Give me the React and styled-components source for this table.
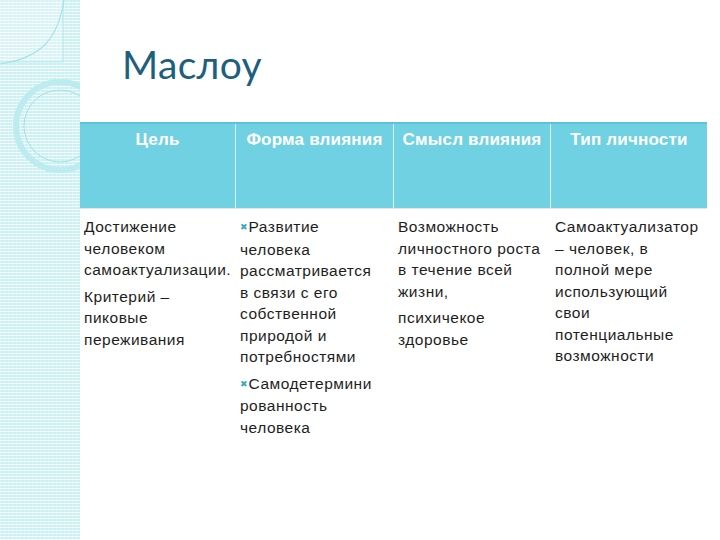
import styled, {createGlobalStyle} from 'styled-components';

const GlobalStyle = createGlobalStyle`
  html, body {
    margin: 0;
    padding: 0;
    background: #ffffff;
  }
  body {
    font-family: "Liberation Sans", Arial, sans-serif;
  }
`;

const columns = [
  {
    title: 'Цель',
    paras: [
      {lines: ['Достижение', 'человеком', 'самоактуализации.']},
      {lines: ['Критерий –', 'пиковые', 'переживания']},
    ],
  },
  {
    title: 'Форма влияния',
    paras: [
      {bullet: true, lines: ['Развитие', 'человека', 'рассматривается', 'в связи с его', 'собственной', 'природой и', 'потребностями']},
      {bullet: true, lines: ['Самодетермини', 'рованность', 'человека']},
    ],
  },
  {
    title: 'Смысл влияния',
    paras: [
      {lines: ['Возможность', 'личностного роста', 'в течение всей', 'жизни,']},
      {lines: ['психичекое', 'здоровье']},
    ],
  },
  {
    title: 'Тип личности',
    paras: [
      {lines: ['Самоактуализатор', '– человек, в', 'полной мере', 'использующий', 'свои', 'потенциальные', 'возможности']},
    ],
  },
];

const App = () => {
  return (
    <>
      <GlobalStyle />
      <Page>
        <Strip>
          <svg width="80" height="540" viewBox="0 0 80 540">
            <rect x="0" y="0" width="63" height="62" fill="rgba(255,255,255,0.25)" />
            <path d="M63 0 V62 H0" fill="none" stroke="#b2e7ec" strokeWidth="1" />
            <path d="M64 0 C58 40 40 58 0 64" fill="none" stroke="#a6e2e8" strokeWidth="1.2" />
            <circle cx="60" cy="126" r="44" fill="none" stroke="#bdecf0" strokeWidth="6" />
            <circle cx="60" cy="126" r="36" fill="none" stroke="#a4e0e7" strokeWidth="1" />
          </svg>
        </Strip>
        <Main>
          <Title>Маслоу</Title>
          <Table>
            <HeaderRow>
              {columns.map((c, i) => (
                <HeadCell key={i} $last={i === columns.length - 1}>{c.title}</HeadCell>
              ))}
            </HeaderRow>
            <BodyRow>
              {columns.map((c, i) => (
                <Cell key={i}>
                  {c.paras.map((p, j) => (
                    <Para key={j}>
                      {p.lines.map((l, k) => (
                        <Line key={k}>
                          {p.bullet && k === 0 && <Bullet>✖</Bullet>}
                          {l}
                        </Line>
                      ))}
                    </Para>
                  ))}
                </Cell>
              ))}
            </BodyRow>
          </Table>
        </Main>
      </Page>
    </>
  );
};

const Page = styled.div`
  display: flex;
  width: 720px;
  height: 540px;
  overflow: hidden;
`;

const Strip = styled.div`
  width: 80px;
  flex: 0 0 80px;
  height: 540px;
  background-color: #c9f0f2;
  background-image:
    repeating-linear-gradient(0deg, rgba(255,255,255,0.8) 0 1px, transparent 1px 3px),
    repeating-linear-gradient(90deg, rgba(255,255,255,0.35) 0 1px, transparent 1px 4px);
  svg {
    display: block;
  }
`;

const Main = styled.div`
  flex: 1;
  display: flex;
  flex-direction: column;
`;

const Title = styled.h1`
  margin: 0;
  padding: 45px 0 0 42px;
  height: 122px;
  box-sizing: border-box;
  font-family: "Lato", "Open Sans", sans-serif;
  font-weight: 400;
  font-size: 39px;
  line-height: 1;
  letter-spacing: 0.3px;
  color: #1f5f7e;
`;

const Table = styled.div`
  width: 627px;
  display: flex;
  flex-direction: column;
`;

const HeaderRow = styled.div`
  display: grid;
  grid-template-columns: 156px 158px 157px 156px;
  height: 87px;
  background: #70d1e3;
  border-top: 2px solid #5bc4da;
  box-sizing: border-box;
  border-bottom: 1px solid #f4dede;
`;

const HeadCell = styled.div`
  padding-top: 6px;
  text-align: center;
  color: #ffffff;
  font-weight: 700;
  font-size: 17px;
  letter-spacing: 0.2px;
  border-right: ${({$last}) => ($last ? 'none' : '1px solid #d6f2f7')};
`;

const BodyRow = styled.div`
  display: grid;
  grid-template-columns: 156px 158px 157px 156px;
  padding-top: 7px;
`;

const Cell = styled.div`
  padding-left: 4px;
  display: flex;
  flex-direction: column;
  gap: 5px;
  color: #1e1e1e;
  font-size: 15.5px;
  letter-spacing: 0.5px;
  line-height: 21.5px;
`;

const Para = styled.div`
  display: flex;
  flex-direction: column;
`;

const Line = styled.div`
  white-space: nowrap;
`;

const Bullet = styled.span`
  color: #3aa8c4;
  font-family: "DejaVu Sans", sans-serif;
  font-size: 9px;
  letter-spacing: 0;
  margin-right: 1px;
  vertical-align: 2px;
`;

export default App;
